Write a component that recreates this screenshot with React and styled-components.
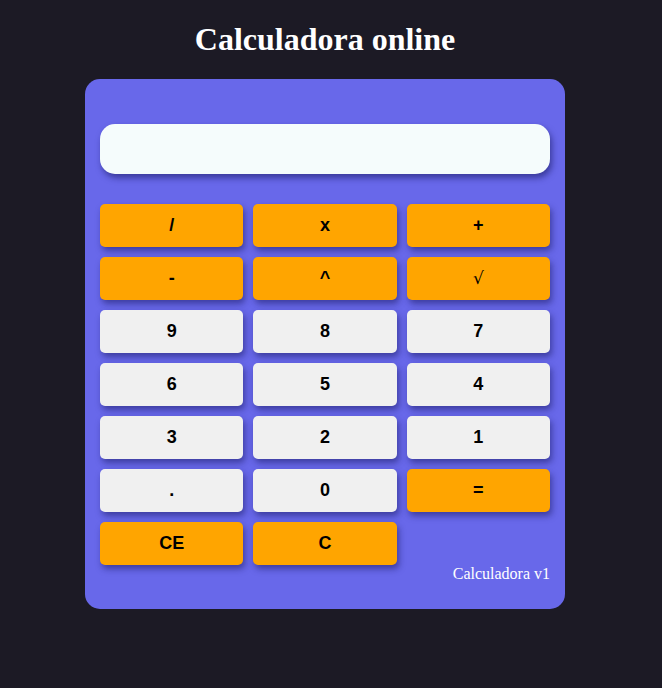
import React, { useState } from 'react';
import styled, { createGlobalStyle } from 'styled-components';

const GlobalStyle = createGlobalStyle`
  html, body {
    background-color: #1c1a25;
  }
  body {
    margin: 8px;
    font-family: "Liberation Serif", "Times New Roman", serif;
  }
`;

const Page = styled.div`
  display: flex;
  flex-direction: column;
  align-items: center;
  padding-right: 12px;
`;

const Title = styled.h1`
  color: #ffffff;
  font-size: 32px;
  font-weight: bold;
  margin: 13px 0 21px;
`;

const Card = styled.div`
  width: 450px;
  background-color: #6868ea;
  border-radius: 15px;
  padding: 45px 15px 26px;
  display: flex;
  flex-direction: column;
`;

const Display = styled.input`
  box-sizing: border-box;
  width: 100%;
  height: 50px;
  border: none;
  border-radius: 15px;
  background-color: #f5fcfc;
  box-shadow: 2px 4px 6px rgba(20, 20, 90, 0.55);
  padding: 0 16px;
  font-family: "Liberation Sans", Arial, sans-serif;
  font-size: 22px;
  text-align: right;
  margin-bottom: 30px;

  &:focus {
    outline: none;
  }
`;

const Keys = styled.div`
  display: grid;
  grid-template-columns: repeat(3, 1fr);
  gap: 10px;
`;

const Key = styled.button`
  height: 43px;
  border: none;
  border-radius: 5px;
  background-color: ${(p) => (p.$op ? '#ffa500' : '#f0f0f0')};
  color: #000;
  font-family: "Liberation Sans", Arial, sans-serif;
  font-size: 18px;
  font-weight: bold;
  cursor: pointer;
  box-shadow: 2px 4px 6px rgba(20, 20, 90, 0.5);
`;

const Root = styled.span`
  font-family: "DejaVu Serif", serif;
  font-weight: normal;
  font-size: 17px;
`;

const Footer = styled.p`
  margin: 0;
  color: #ffffff;
  font-size: 16px;
  text-align: right;
`;

const keys = [
  { label: '/', op: true },
  { label: 'x', op: true },
  { label: '+', op: true },
  { label: '-', op: true },
  { label: '^', op: true },
  { label: '√', op: true, root: true },
  { label: '9' },
  { label: '8' },
  { label: '7' },
  { label: '6' },
  { label: '5' },
  { label: '4' },
  { label: '3' },
  { label: '2' },
  { label: '1' },
  { label: '.' },
  { label: '0' },
  { label: '=', op: true },
  { label: 'CE', op: true },
  { label: 'C', op: true },
];

const App = () => {
  const [value, setValue] = useState('');

  const press = (label) => {
    if (label === 'C') return setValue('');
    if (label === 'CE') return setValue((v) => v.slice(0, -1));
    if (label === '=') return;
    setValue((v) => v + label);
  };

  return (
    <Page>
      <GlobalStyle />
      <Title>Calculadora online</Title>
      <Card>
        <Display value={value} onChange={(e) => setValue(e.target.value)} />
        <Keys>
          {keys.map((k) => (
            <Key key={k.label} $op={k.op} onClick={() => press(k.label)}>
              {k.root ? <Root>{k.label}</Root> : k.label}
            </Key>
          ))}
        </Keys>
        <Footer>Calculadora v1</Footer>
      </Card>
    </Page>
  );
};

export default App;
